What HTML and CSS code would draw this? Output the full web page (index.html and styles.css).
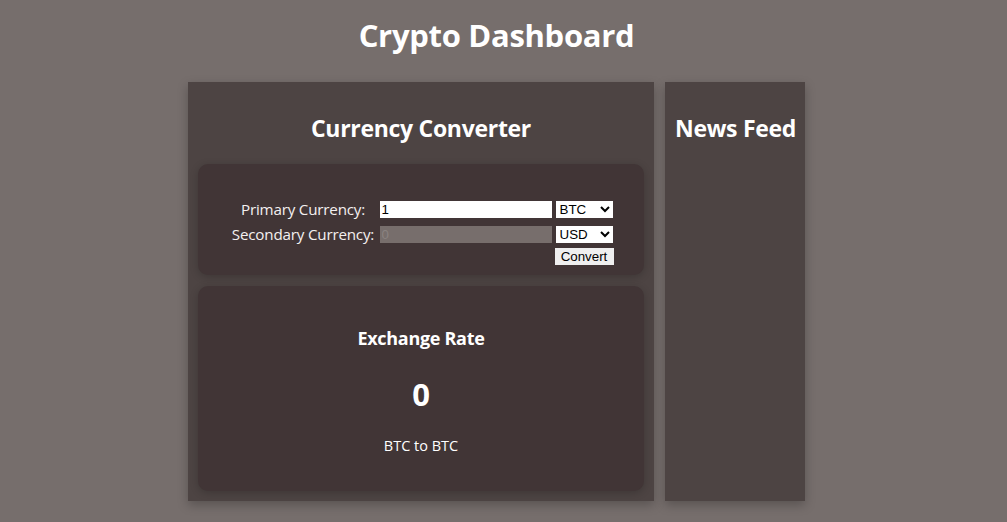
FILE: index.html
```html
<!DOCTYPE html>
<html lang="en">
<head>
<meta charset="utf-8">
<title>Crypto Dashboard</title>
<link rel="stylesheet" href="styles.css">
</head>
<body>
<header class="page-header">
  <h1 class="page-title">Crypto Dashboard</h1>
</header>
<main class="dashboard">
  <section class="card converter-card">
    <h2 class="card-title">Currency Converter</h2>
    <div class="panel form-panel">
      <form class="converter-form">
        <label class="form-label" for="primary">Primary Currency:</label>
        <input class="amount-input" id="primary" type="text" value="1">
        <select class="currency-select"><option>BTC</option><option>ETH</option><option>USD</option></select>
        <label class="form-label" for="secondary">Secondary Currency:</label>
        <input class="amount-input amount-output" id="secondary" type="text" placeholder="0" disabled>
        <select class="currency-select"><option>USD</option><option>BTC</option><option>EUR</option></select>
        <button class="convert-btn" type="button">Convert</button>
      </form>
    </div>
    <div class="panel rate-panel">
      <h3 class="rate-title">Exchange Rate</h3>
      <div class="rate-value">0</div>
      <p class="rate-pair">BTC to BTC</p>
    </div>
  </section>
  <section class="card news-card">
    <h2 class="card-title">News Feed</h2>
  </section>
</main>
</body>
</html>
```
FILE: styles.css
```css
* { box-sizing: border-box; }
html, body { margin: 0; padding: 0; }
body {
  background: #766e6c;
  color: #ffffff;
  font-family: "Open Sans", "Noto Sans", sans-serif;
  height: 522px;
  overflow: hidden;
  padding-right: 14px;
}
.page-header {
  display: flex;
  justify-content: center;
  padding-top: 14px;
}
.page-title {
  margin: 0;
  font-size: 31px;
  line-height: 42px;
  font-weight: 700;
  letter-spacing: -0.3px;
}
.dashboard {
  display: flex;
  justify-content: center;
  align-items: stretch;
  gap: 11px;
  margin-top: 26px;
}
.card {
  background: #4d4443;
  padding: 10px;
  box-shadow: 0 4px 10px rgba(0,0,0,0.25);
}
.converter-card { width: 466px; }
.news-card { width: 140px; }
.card-title {
  margin: 20px 0;
  text-align: center;
  font-size: 23px;
  line-height: 32px;
  font-weight: 700;
  letter-spacing: -0.3px;
  white-space: nowrap;
}
.panel {
  background: #413536;
  border-radius: 10px;
  box-shadow: 0 2px 8px rgba(0,0,0,0.2);
}
.form-panel {
  padding: 37px 0 10px;
  display: flex;
  justify-content: center;
  margin-bottom: 11px;
}
.converter-form {
  display: grid;
  grid-template-columns: 147px 172px 58px;
  grid-template-rows: 25px 22px 17px;
  column-gap: 3px;
  align-items: start;
}
.form-label {
  text-align: center;
  font-size: 15.2px;
  line-height: 17px;
  color: #f4f0f0;
  white-space: nowrap;
  letter-spacing: -0.2px;
}
.amount-input {
  width: 172px;
  height: 17px;
  border: none;
  padding: 0 2px;
  background: #ffffff;
  color: #000;
  font-family: "Liberation Sans", Arial, sans-serif;
  font-size: 13.33px;
  outline: none;
}
.amount-output {
  background: #776e6c;
}
.amount-output::placeholder { color: #8a8280; }
.currency-select {
  width: 57px;
  height: 17px;
  border: none;
  background: #ffffff;
  color: #000;
  font-family: "Liberation Sans", Arial, sans-serif;
  font-size: 13.33px;
  padding: 0;
  margin-left: 1px;
}
.convert-btn {
  grid-column: 3;
  width: 59px;
  height: 17px;
  border: none;
  background: #efefef;
  color: #000;
  font-family: "Liberation Sans", Arial, sans-serif;
  font-size: 13.33px;
  padding: 0;
}
.rate-panel {
  padding: 20px;
  text-align: center;
  height: 205px;
}
.rate-title {
  margin: 19px 0 0;
  font-size: 18px;
  line-height: 26px;
  font-weight: 700;
  letter-spacing: -0.3px;
}
.rate-value {
  margin-top: 22px;
  font-size: 31px;
  line-height: 42px;
  font-weight: 700;
}
.rate-pair {
  margin: 20px 0 0;
  font-size: 14.5px;
  line-height: 21px;
}
```
